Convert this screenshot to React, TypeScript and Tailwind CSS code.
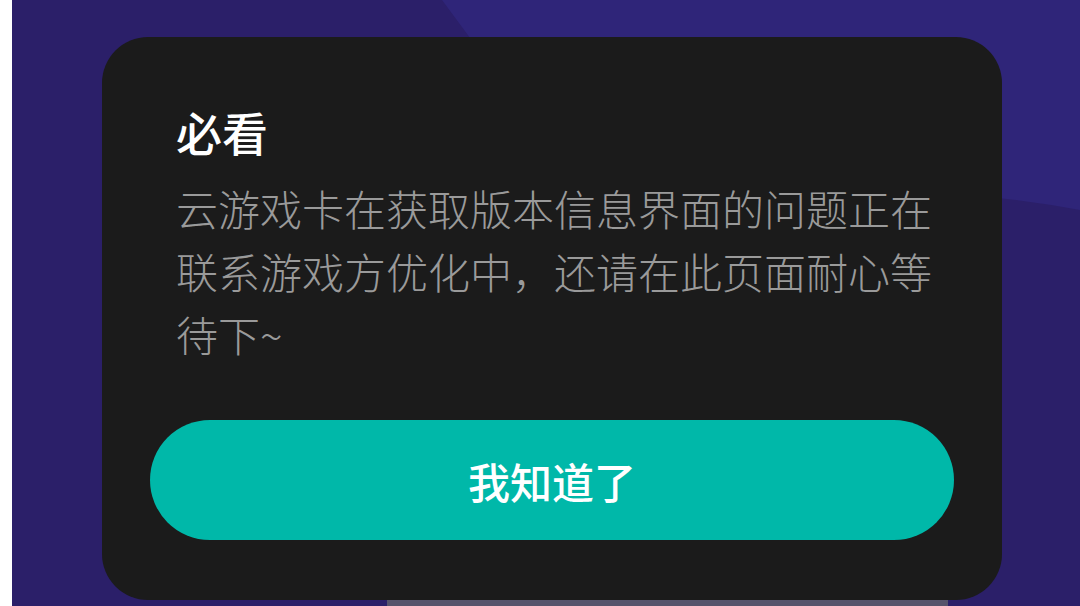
import React from 'react';

const cjk = "font-['Noto_Sans_CJK_SC','Noto_Sans',sans-serif]";

function Backdrop() {
  return (
    <svg className="absolute inset-0 h-full w-full" viewBox="0 0 1068 606" preserveAspectRatio="none">
      <rect width="1068" height="606" fill="#2b1f69" />
      <path d="M430 0 L1068 0 L1068 210 Q960 190 860 192 L600 230 Z" fill="#2f2579" />
    </svg>
  );
}

export default function App() {
  return (
    <div className={`flex h-[606px] w-[1080px] overflow-hidden bg-white ${cjk}`}>
      <div className="w-[12px] shrink-0 bg-white" />

      <div className="relative flex-1 overflow-hidden">
        <Backdrop />

        {/* page content peeking under the dialog */}
        <div className="relative pl-[375px] pt-[600px]">
          <div className="flex h-[60px] w-[561px] items-start gap-6 bg-[#56536b] px-12 pt-[4px] text-[26px] leading-[30px] text-[#a19eb4]">
            <span>每日签到</span>
            <span>即可领取免费时长</span>
          </div>
        </div>

        {/* Dialog */}
        <div className="absolute left-[90px] top-[37px] flex h-[563px] w-[900px] flex-col rounded-[46px] bg-[#1b1b1b] pt-[66px]">
          <div className="pl-[74px] pr-[60px]">
            <h2 className="text-[46px] font-medium leading-[56px] text-white">必看</h2>
            <p className="mt-[17px] text-[42px] font-light leading-[63px] text-[#9a9a9a]">
              云游戏卡在获取版本信息界面的问题正在联系游戏方优化中，还请在此页面耐心等待下~
            </p>
          </div>
          <button className="mx-[48px] mt-[55px] flex h-[120px] items-center justify-center rounded-full bg-[#00b8a9] text-[42px] font-medium text-white">
            我知道了
          </button>
        </div>
      </div>
    </div>
  );
}
